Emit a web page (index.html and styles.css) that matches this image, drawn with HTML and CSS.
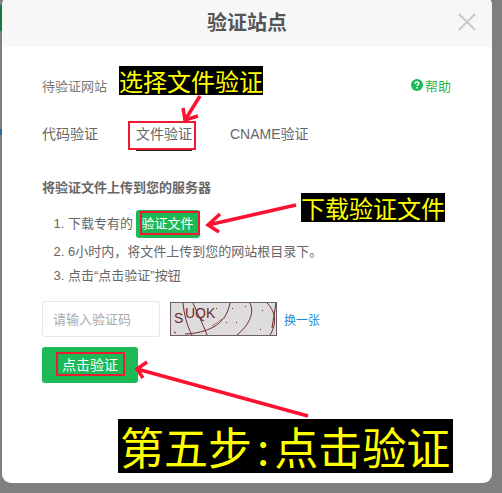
FILE: index.html
```html
<!DOCTYPE html>
<html lang="en">

<head>
    <meta charset="UTF-8">
    <title>验证站点</title>
    <link rel="stylesheet" href="styles.css">
</head>

<body>
    <div class="dialog">
        <div class="dialog-header">
            <h2 class="dialog-title">验证站点</h2>
            <svg class="close" width="18" height="18" viewBox="0 0 18 18">
                <path d="M1 1L17 17M17 1L1 17" stroke="#c9c9c9" stroke-width="2" fill="none" />
            </svg>
        </div>
        <div class="dialog-body">
            <div class="site-row">
                <span>待验证网站</span>
                <a class="help">
                    <svg width="12" height="12" viewBox="0 0 12 12">
                        <circle cx="6" cy="6" r="6" fill="#1bba57" />
                        <path d="M4.1 4.7C4.1 3.5 5 3 6 3C7.1 3 7.9 3.6 7.9 4.5C7.9 5.6 6.1 5.7 6.1 7" stroke="#fff" stroke-width="1.4" fill="none" />
                        <rect x="5.3" y="8" width="1.5" height="1.5" fill="#fff" />
                    </svg>
                    帮助
                </a>
            </div>
            <div class="tabs">
                <span class="tab">代码验证</span>
                <span class="tab tab-active">文件验证</span>
                <span class="tab">CNAME验证</span>
            </div>
            <div class="upload-title">将验证文件上传到您的服务器</div>
            <ol class="steps">
                <li>下载专有的 <a class="btn btn-small">验证文件</a></li>
                <li>6小时内，将文件上传到您的网站根目录下。</li>
                <li>点击“点击验证”按钮</li>
            </ol>
            <div class="captcha-row">
                <input class="captcha-input" placeholder="请输入验证码">
                <svg class="captcha" width="107" height="34" viewBox="0 0 107 34">
                    <rect x="0.5" y="0.5" width="106" height="33" fill="#dedcdc" stroke="#6b5f5f" />
                    <text x="4" y="21" class="captcha-text">S</text>
                    <text x="15" y="16" class="captcha-text">UQK</text>
                    <path d="M13 1C14 12 17 24 22 33M23 1C26 8 32 20 37 33M15 32C36 31 56 24 60 1M67 33C78 24 85 12 80 1M97 1C106 10 107 22 100 33M106 1L102 26" stroke="#6e2b2b" fill="none" />
                    <path d="M42 24C47 21 51 17 55 16" stroke="#a58080" fill="none" />
                    <path d="M4 30L6 31M56 20L57 21M66 20L67 21M90 27L91 28M62 6L63 7M75 4L76 5M46 6L47 7M92 8L93 9" stroke="#6e2b2b" fill="none" />
                </svg>
                <a class="refresh">换一张</a>
            </div>
            <a class="btn btn-submit">点击验证</a>
        </div>
    </div>

    <!-- annotations drawn on top of the screenshot -->
    <div class="note note-tab">选择文件验证</div>
    <div class="note note-file">下载验证文件</div>
    <div class="note note-step">第五步<span class="note-colon">:</span>点击验证</div>
    <div class="frame frame-tab"></div>
    <div class="frame frame-file"></div>
    <div class="frame frame-submit"></div>
    <svg class="arrows" width="502" height="493" viewBox="0 0 502 493">
        <g stroke="#fb1230" stroke-width="3.5" fill="none">
            <path d="M200 96L185 120M183 108L185 120L198 116" />
            <path d="M296 205L208 225M220 214L208 225L219 232" />
            <path d="M308 416L137 369M147 362L137 369L143 378" />
        </g>
    </svg>
</body>

</html>
```

FILE: styles.css
```css
html,
body {
    margin: 0;
    padding: 0;
}

body {
    position: relative;
    width: 502px;
    height: 493px;
    overflow: hidden;
    background-color: #7f7f7f;
    /* bits of the page showing at the left edge, under the overlay */
    background-image: linear-gradient(#1a7a45, #1a7a45), linear-gradient(#2f6b9a, #2f6b9a);
    background-size: 2px 26px, 2px 6px;
    background-position: 0 5px, 0 129px;
    background-repeat: no-repeat;
    font-family: "Liberation Sans", "Noto Sans CJK SC", sans-serif;
    color: #666;
    font-size: 13px;
}

.dialog {
    width: 490px;
    height: 487px;
    margin: -4px 0 0 2px;
    background-color: #fff;
    border-radius: 9px;
    overflow: hidden;
}

.dialog-header {
    display: flex;
    justify-content: center;
    align-items: center;
    position: relative;
    height: 51px;
    box-sizing: border-box;
    background-color: #f7f7f7;
}

.dialog-title {
    margin: 0;
    font-size: 20px;
    font-weight: bold;
    color: #555;
}

.close {
    position: absolute;
    right: 16px;
    top: 17px;
}

.dialog-body {
    padding: 0 40px;
}

.site-row {
    display: flex;
    justify-content: space-between;
    align-items: center;
    margin-top: 28px;
    height: 20px;
    color: #777;
}

.help {
    display: flex;
    align-items: center;
    gap: 2px;
    margin-right: 1px;
    color: #1bba57;
}

.tabs {
    display: flex;
    gap: 38px;
    margin-top: 29px;
    font-size: 14px;
    line-height: 20px;
}

.tab-active {
    padding-bottom: 5px;
    border-bottom: 2px solid #222;
}

.upload-title {
    margin-top: 27px;
    font-weight: bold;
    color: #666;
    line-height: 20px;
}

.steps {
    margin: 12px 0 0;
    padding-left: 26px;
}

.steps li {
    height: 24px;
    line-height: 24px;
}

.steps li:first-child {
    height: 30px;
    line-height: 28px;
}

.btn {
    display: inline-block;
    background-color: #1bba57;
    color: #fff;
    border-radius: 3px;
    text-align: center;
}

.btn-small {
    width: 64px;
    height: 28px;
    line-height: 28px;
    margin-left: -1px;
}

.captcha-row {
    display: flex;
    align-items: center;
    margin-top: 13px;
}

.captcha-input {
    width: 118px;
    height: 36px;
    box-sizing: border-box;
    padding: 0 10px;
    border: 1px solid #e8e8e8;
    border-radius: 2px;
    font-family: inherit;
    font-size: 13px;
}

.captcha-input::placeholder {
    color: #aaa;
}

.captcha {
    margin-left: 10px;
}

.captcha-text {
    font-family: "Liberation Sans", sans-serif;
    font-size: 14px;
    fill: #6e2b2b;
}

.refresh {
    margin-left: 7px;
    font-size: 12px;
    color: #1a8bd6;
}

.btn-submit {
    display: block;
    width: 96px;
    height: 36px;
    line-height: 36px;
    margin-top: 10px;
    font-size: 14px;
}

.note {
    position: absolute;
    background-color: #000;
    color: #ff0;
    font-family: "Noto Sans CJK SC", sans-serif;
    white-space: nowrap;
    text-align: center;
}

.note-tab,
.note-file {
    width: 144px;
    height: 29px;
    font-size: 24px;
    line-height: 29px;
}

.note-tab {
    left: 119px;
    top: 66px;
}

.note-file {
    left: 301px;
    top: 193px;
}

.note-step {
    left: 118px;
    top: 419px;
    width: 335px;
    height: 54px;
    font-size: 44px;
    line-height: 54px;
    text-align: left;
    padding-left: 2px;
    box-sizing: border-box;
}

.note-colon {
    padding: 0 5px;
}

.frame {
    position: absolute;
    box-sizing: border-box;
    border: 2px solid #ed1c34;
}

.frame-tab {
    left: 128px;
    top: 121px;
    width: 68px;
    height: 29px;
}

.frame-file {
    left: 140px;
    top: 211px;
    width: 60px;
    height: 24px;
}

.frame-submit {
    left: 56px;
    top: 352px;
    width: 69px;
    height: 24px;
}

.arrows {
    position: absolute;
    left: 0;
    top: 0;
}
```
